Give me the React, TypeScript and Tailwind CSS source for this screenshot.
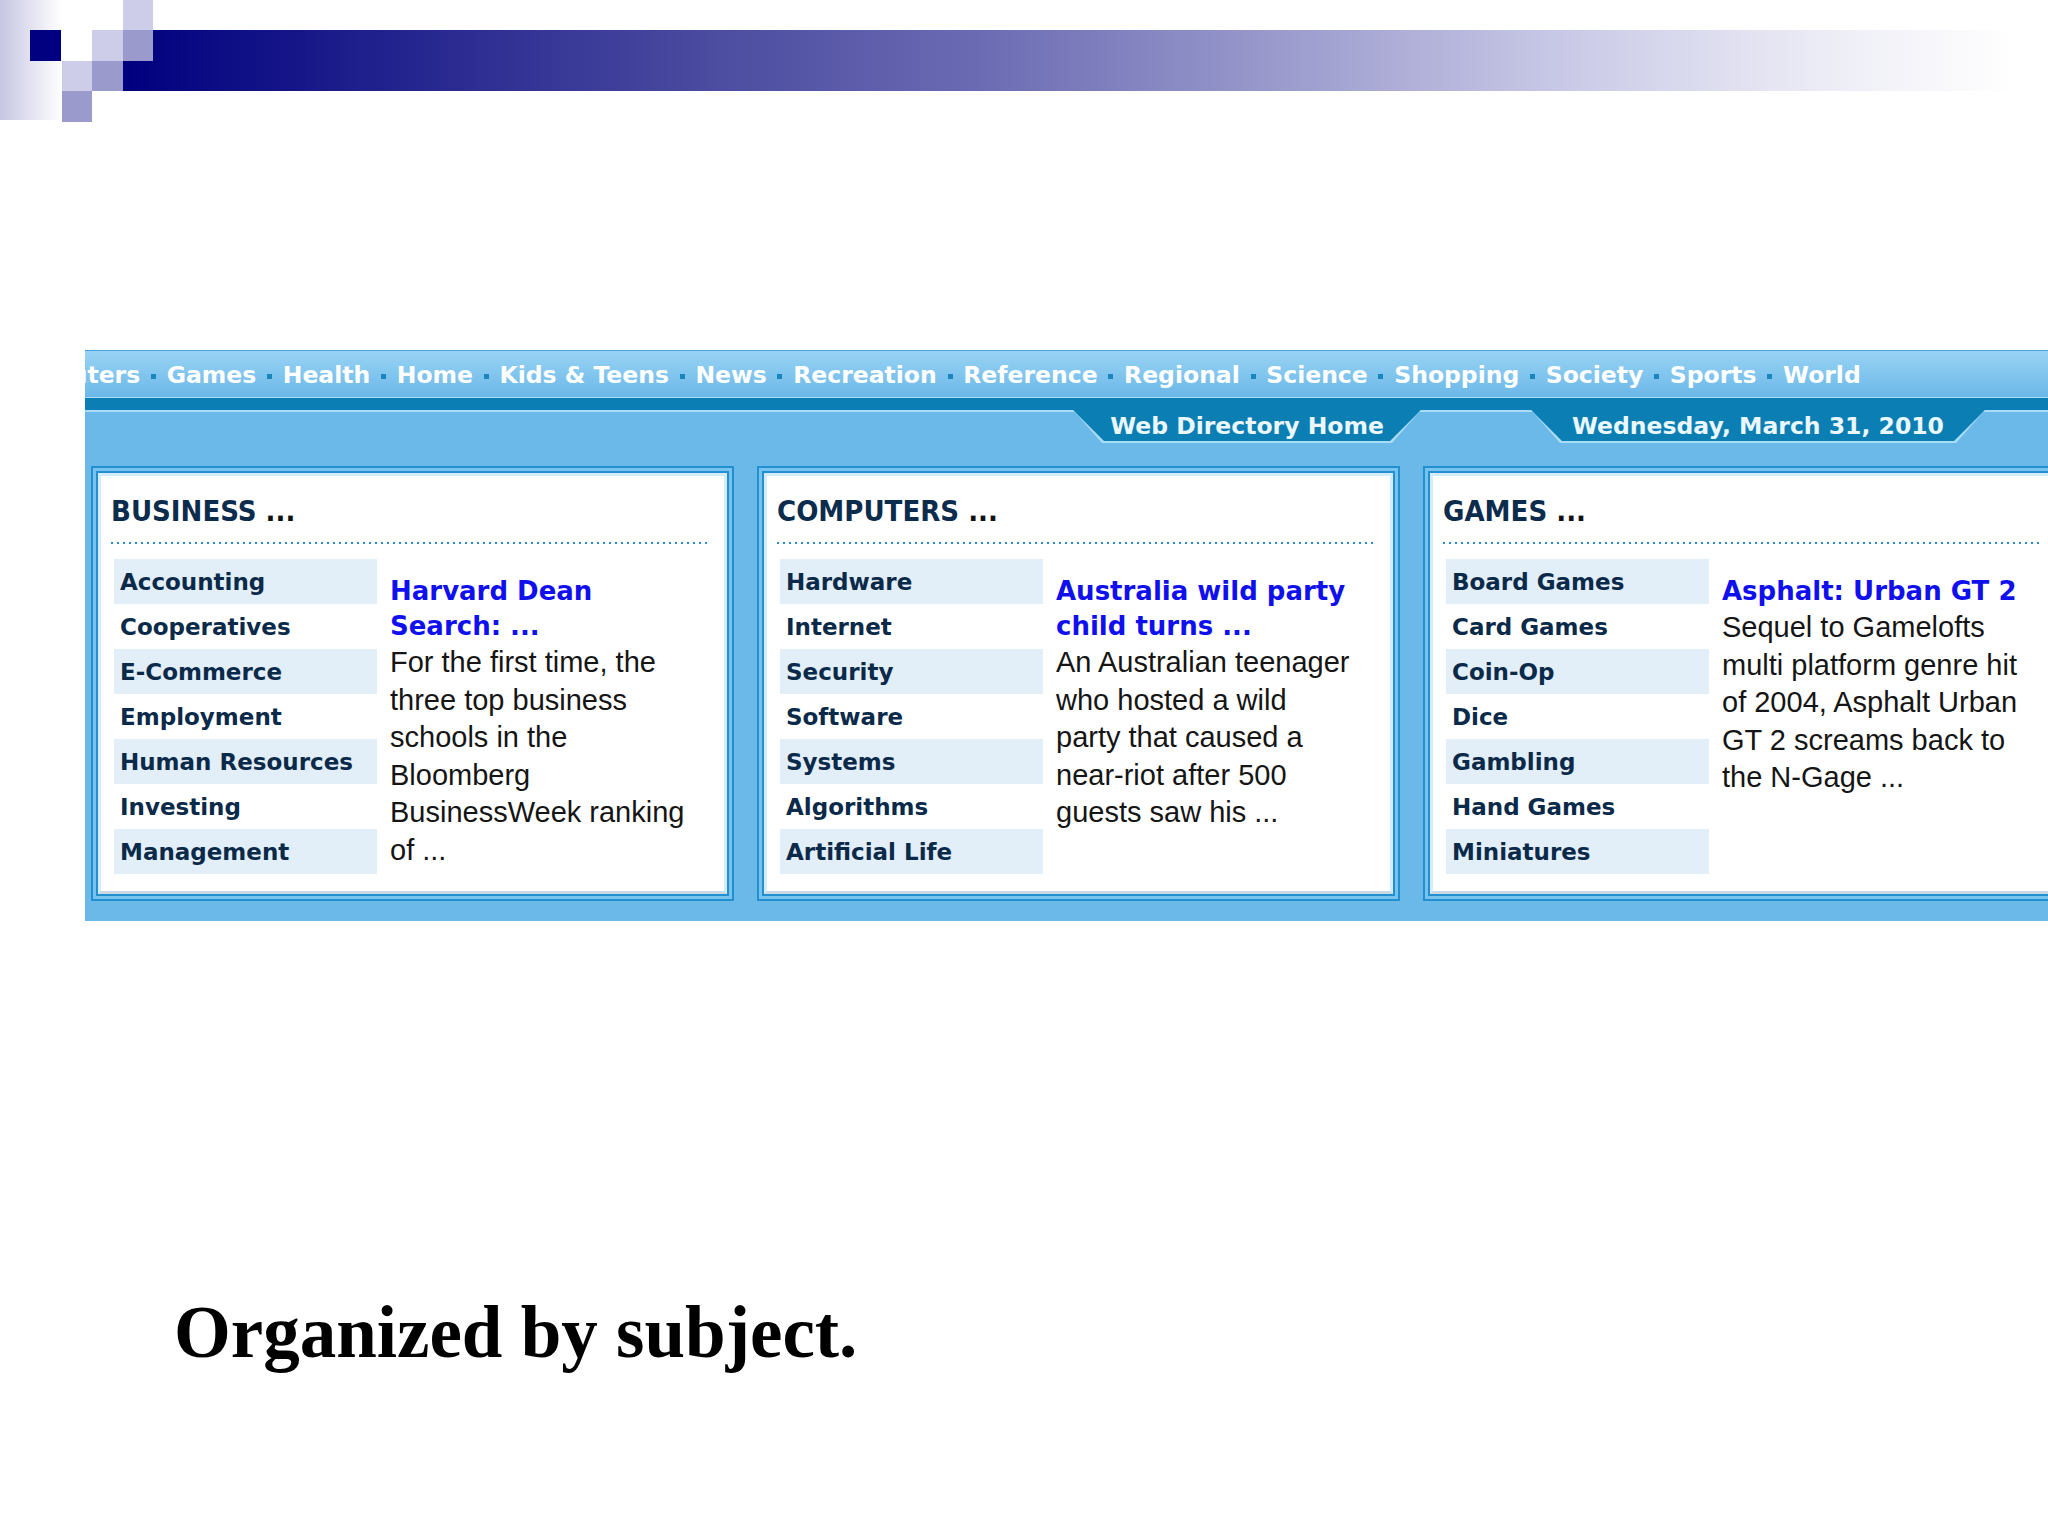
import React from "react";

const NAV = [
  "Computers",
  "Games",
  "Health",
  "Home",
  "Kids & Teens",
  "News",
  "Recreation",
  "Reference",
  "Regional",
  "Science",
  "Shopping",
  "Society",
  "Sports",
  "World",
];

type PanelData = {
  title: string;
  cats: string[];
  head: string[];
  body: string[];
};

const PANELS: PanelData[] = [
  {
    title: "BUSINESS",
    cats: [
      "Accounting",
      "Cooperatives",
      "E-Commerce",
      "Employment",
      "Human Resources",
      "Investing",
      "Management",
    ],
    head: ["Harvard Dean", "Search: ..."],
    body: [
      "For the first time, the",
      "three top business",
      "schools in the",
      "Bloomberg",
      "BusinessWeek ranking",
      "of ...",
    ],
  },
  {
    title: "COMPUTERS",
    cats: [
      "Hardware",
      "Internet",
      "Security",
      "Software",
      "Systems",
      "Algorithms",
      "Artificial Life",
    ],
    head: ["Australia wild party", "child turns ..."],
    body: [
      "An Australian teenager",
      "who hosted a wild",
      "party that caused a",
      "near-riot after 500",
      "guests saw his ...",
    ],
  },
  {
    title: "GAMES",
    cats: [
      "Board Games",
      "Card Games",
      "Coin-Op",
      "Dice",
      "Gambling",
      "Hand Games",
      "Miniatures",
    ],
    head: ["Asphalt: Urban GT 2"],
    body: [
      "Sequel to Gamelofts",
      "multi platform genre hit",
      "of 2004, Asphalt Urban",
      "GT 2 screams back to",
      "the N-Gage ...",
    ],
  },
];

// slide template decoration (squares + fading bar)
function Header() {
  const light = "#cdcde9";
  const mid = "#9a9acd";
  return (
    <svg width="2048" height="122" viewBox="0 0 2048 122" className="block">
      <defs>
        <linearGradient id="strip" x1="0" x2="1" y1="0" y2="0">
          <stop offset="0" stopColor="#c6c6e3" />
          <stop offset="1" stopColor="#ffffff" />
        </linearGradient>
        <linearGradient id="bar" x1="0" x2="1" y1="0" y2="0">
          <stop offset="0" stopColor="#00007f" />
          <stop offset="0.31" stopColor="#4b4ba0" />
          <stop offset="0.45" stopColor="#6a6ab3" />
          <stop offset="0.63" stopColor="#a0a0d0" />
          <stop offset="0.77" stopColor="#cbcbe8" />
          <stop offset="0.9" stopColor="#ececf6" />
          <stop offset="1" stopColor="#ffffff" />
        </linearGradient>
      </defs>
      <rect x="0" y="0" width="62" height="120" fill="url(#strip)" />
      <rect x="123" y="30" width="1890" height="61" fill="url(#bar)" />
      <rect x="30" y="30" width="31" height="31" fill="#000080" />
      <rect x="123" y="0" width="30" height="30" fill={light} />
      <rect x="92" y="30" width="31" height="31" fill={light} />
      <rect x="123" y="30" width="30" height="31" fill={mid} />
      <rect x="62" y="61" width="30" height="30" fill={light} />
      <rect x="92" y="61" width="31" height="30" fill={mid} />
      <rect x="62" y="91" width="30" height="31" fill={mid} />
    </svg>
  );
}

function Tab({ label, width }: { label: string; width: string }) {
  return (
    <div
      className={`${width} h-[33px] shrink-0 bg-[#a9dcf6] [clip-path:polygon(0_0,100%_0,calc(100%-29px)_100%,29px_100%)]`}
    >
      <div className="h-full flex items-center justify-center pt-[1px] bg-[#0b7fb3] [clip-path:polygon(0_0,100%_0,calc(100%-31px)_calc(100%-2px),31px_calc(100%-2px))]">
        <span className="font-['DejaVu_Sans',sans-serif] font-bold text-[23.5px] leading-none text-[#eaf7fe] whitespace-nowrap">
          {label}
        </span>
      </div>
    </div>
  );
}

function Panel({ p }: { p: PanelData }) {
  return (
    <div className="w-[643px] shrink-0 border-2 border-[#2290d0] bg-[#78c2ee] p-[3px]">
      <div className="border-2 border-[#2290d0]">
        <div className="border-[3px] border-[#d3ecfa] border-b-[#c9d9e4] bg-white pl-[10px] pr-[17px] pt-[17px] pb-[17px]">
          <div className="h-[36px] leading-[36px] whitespace-nowrap font-['DejaVu_Sans_Condensed','DejaVu_Sans',sans-serif] [font-stretch:condensed] font-bold text-[29px] text-[#0c2c4d]">
            {p.title} <span className="text-[#111]">...</span>
          </div>
          <div className="mt-[13px] h-[2px] bg-[repeating-linear-gradient(90deg,#2d8fc7_0px,#2d8fc7_2px,transparent_2px,transparent_6px)]" />
          <div className="mt-[15px] flex">
            <div className="ml-[3px] w-[263px] shrink-0">
              {p.cats.map((c, i) => (
                <div
                  key={c}
                  className={`h-[45px] flex items-center pl-[6px] pt-[1px] whitespace-nowrap font-['DejaVu_Sans',sans-serif] font-bold text-[23px] text-[#0b2a4a] ${
                    i % 2 === 0 ? "bg-[#e2eef8]" : "bg-white"
                  }`}
                >
                  {c}
                </div>
              ))}
            </div>
            <div className="ml-[13px] mt-[15px] flex-1 whitespace-nowrap">
              {p.head.map((h) => (
                <div
                  key={h}
                  className="leading-[35px] font-['DejaVu_Sans',sans-serif] font-bold text-[26px] text-[#1010ee]"
                >
                  {h}
                </div>
              ))}
              {p.body.map((b) => (
                <div
                  key={b}
                  className="leading-[37.5px] font-['Liberation_Sans',Arial,sans-serif] text-[29px] text-[#151515]"
                >
                  {b}
                </div>
              ))}
            </div>
          </div>
        </div>
      </div>
    </div>
  );
}

export default function App() {
  return (
    <div className="w-[2048px] h-[1536px] bg-white overflow-hidden">
      <Header />

      {/* directory screenshot */}
      <div className="mt-[228px] ml-[85px] w-[1963px] overflow-hidden bg-[#6bb9e9]">
        <div className="h-[48px] border-t border-b border-t-[#4aa2da] border-b-[#aadcf6] bg-gradient-to-b from-[#98d3f4] to-[#6bb8e9] flex items-center overflow-hidden whitespace-nowrap">
          <div className="ml-[-89px] pt-[4px] flex items-center font-['DejaVu_Sans',sans-serif] font-bold text-[23.5px] leading-none text-white">
            {NAV.map((n, i) => (
              <React.Fragment key={n}>
                {i > 0 && (
                  <span className="mx-[10.75px] h-[5px] w-[5px] bg-[#1b85bd]" />
                )}
                <span>{n}</span>
              </React.Fragment>
            ))}
          </div>
        </div>
        <div className="h-[12px] bg-[#0b7fb3]" />
        <div className="h-[33px] flex pl-[988px] bg-[linear-gradient(to_bottom,#a9dcf6_0px,#a9dcf6_2px,#6bb9e9_2px)]">
          <Tab label="Web Directory Home" width="w-[348px]" />
          <div className="w-[110px] shrink-0" />
          <Tab label="Wednesday, March 31, 2010" width="w-[454px]" />
        </div>
        <div className="pt-[23px] pb-[20px] pl-[6px] flex gap-[23px]">
          {PANELS.map((p) => (
            <Panel key={p.title} p={p} />
          ))}
        </div>
      </div>

      <div className="mt-[375px] pl-[174px] font-['Liberation_Serif','Times_New_Roman',serif] font-bold text-[73px] leading-none text-black">
        Organized by subject.
      </div>
    </div>
  );
}
